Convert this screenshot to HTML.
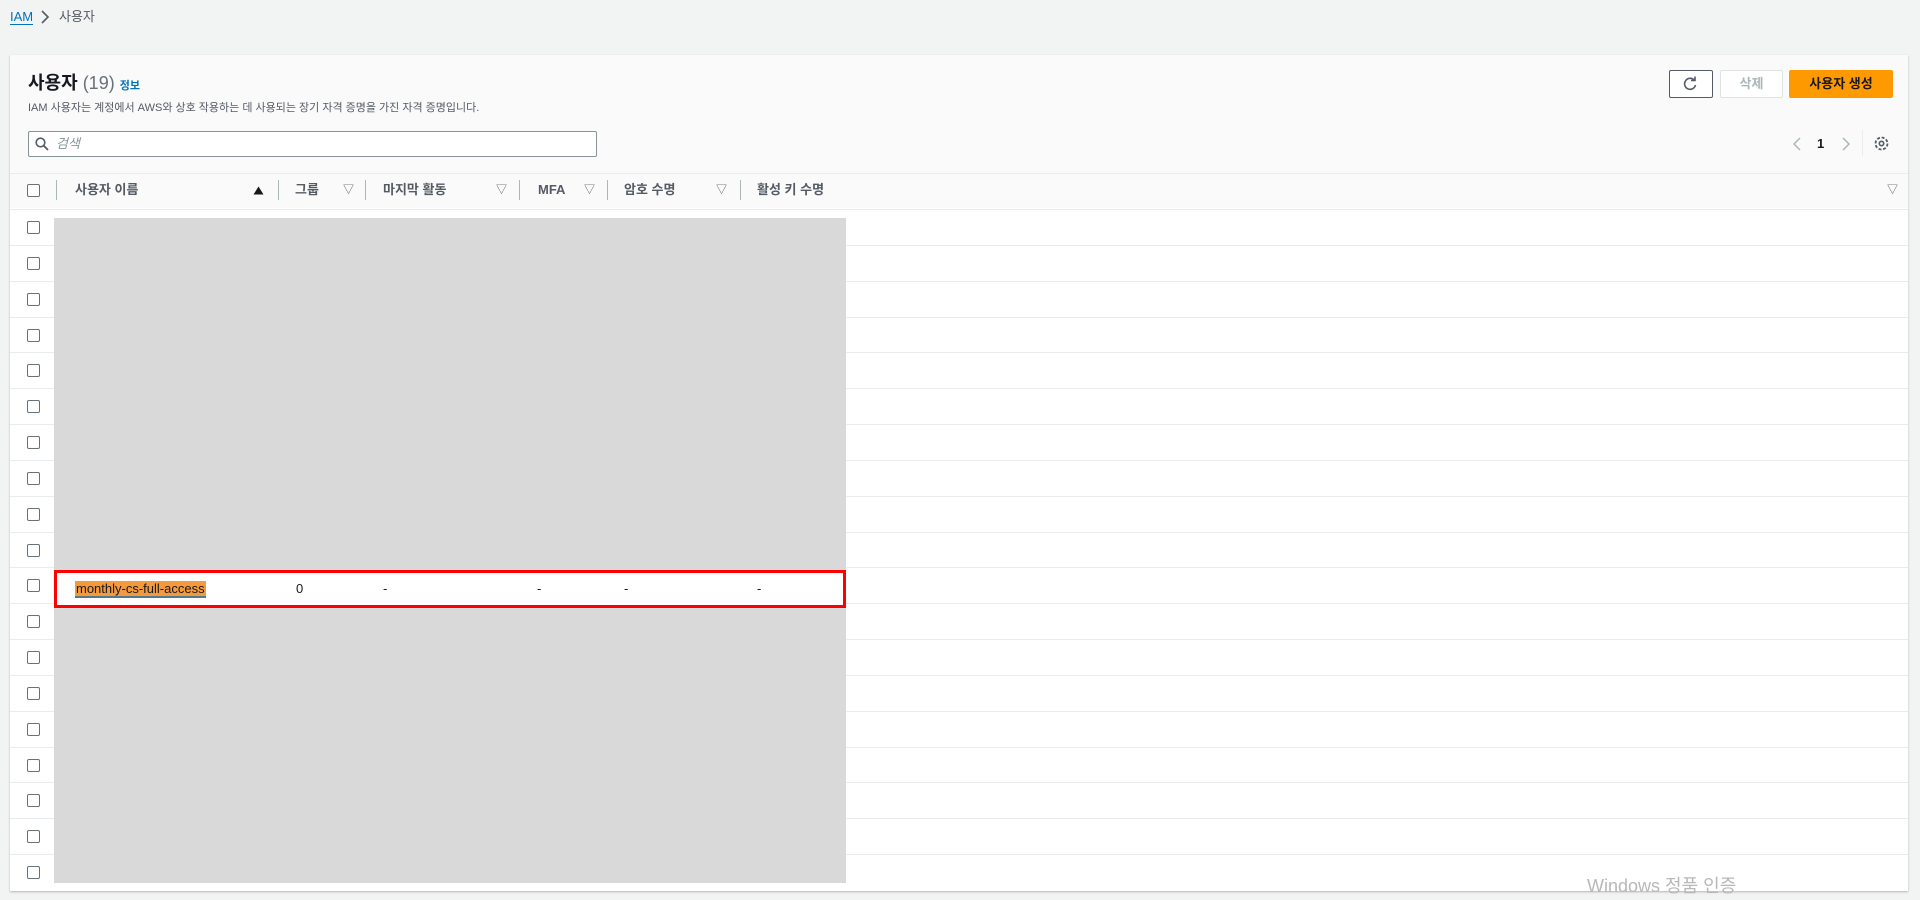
<!DOCTYPE html>
<html><head><meta charset="utf-8"><style>
*{box-sizing:border-box;margin:0;padding:0}
body{width:1920px;height:900px;background:#f2f3f3;font-family:"Liberation Sans","Noto Sans CJK KR",sans-serif;color:#16191f;position:relative;overflow:hidden}
.a{position:absolute;white-space:nowrap}
.panel{position:absolute;left:10px;top:55px;width:1898px;height:836px;background:#fff;box-shadow:0 1px 2px rgba(0,0,0,.25)}
.hdr{position:absolute;left:0;top:0;width:100%;height:153px;background:#fafafa}
.cb{position:absolute;width:13px;height:13px;border:1.5px solid #687078;border-radius:2px;background:#fff}
.row{position:absolute;left:10px;width:1898px;border-top:1px solid #e9ebed;height:36px}
.th{position:absolute;top:180px;height:20px;line-height:20px;font-size:13px;font-weight:bold;color:#545b64}
.sep{position:absolute;top:180px;width:1px;height:20px;background:#aab7b8}
.tri{position:absolute;top:180px;line-height:20px;font-size:11px;color:#545b64}
.cell{position:absolute;top:580px;line-height:18px;font-size:13px;color:#16191f}
</style></head><body>
<div class="a" style="left:10px;top:9px;font-size:13px;color:#0073bb;border-bottom:1px solid #0073bb;line-height:15px">IAM</div>
<svg class="a" style="left:40px;top:10px" width="10" height="14"><path d="M2 1l6 6-6 6" fill="none" stroke="#545b64" stroke-width="1.6"/></svg>
<div class="a" style="left:59px;top:7px;font-size:13px;line-height:20px;color:#545b64">사용자</div>

<div class="panel"><div class="hdr"></div></div>
<div class="a" style="left:28px;top:71px;font-size:18px;font-weight:bold;line-height:24px">사용자 <span style="font-weight:normal;color:#687078">(19)</span> <span style="font-size:11px;color:#0073bb;font-weight:bold">정보</span></div>
<div class="a" style="left:28px;top:100px;font-size:11px;line-height:16px;color:#545b64">IAM 사용자는 계정에서 AWS와 상호 작용하는 데 사용되는 장기 자격 증명을 가진 자격 증명입니다.</div>
<div class="a" style="left:28px;top:131px;width:569px;height:26px;border:1px solid #879596;border-radius:2px;background:#fff"></div>
<svg class="a" style="left:35px;top:137px" width="14" height="14"><circle cx="5.5" cy="5.5" r="4.3" fill="none" stroke="#545b64" stroke-width="1.6"/><path d="M8.8 8.8L13 13" stroke="#545b64" stroke-width="1.8"/></svg>
<div class="a" style="left:56px;top:134px;font-size:13px;line-height:20px;color:#879596;font-style:italic">검색</div>

<div class="a" style="left:1669px;top:70px;width:44px;height:28px;border:1px solid #545b64;border-radius:2px;background:#fff"></div>
<svg class="a" style="left:1682px;top:76px" width="16" height="16"><path d="M12.5 4.5A5.5 5.5 0 1 0 13.5 9" fill="none" stroke="#545b64" stroke-width="1.6"/><path d="M9 4.5h4v-4" fill="none" stroke="#545b64" stroke-width="1.6"/></svg>
<div class="a" style="left:1720px;top:70px;width:63px;height:28px;border:1px solid #e0e3e4;border-radius:2px;background:#fff;color:#aab7b8;font-size:13px;text-align:center;line-height:26px;font-weight:bold">삭제</div>
<div class="a" style="left:1789px;top:70px;width:104px;height:28px;background:#ff9900;border-radius:2px;color:#16191f;font-size:13px;text-align:center;line-height:28px;font-weight:bold">사용자 생성</div>

<svg class="a" style="left:1791px;top:136px" width="12" height="16"><path d="M9 2L3 8l6 6" fill="none" stroke="#aab7b8" stroke-width="1.5"/></svg>
<div class="a" style="left:1817px;top:134px;line-height:20px;font-size:13px;font-weight:bold">1</div>
<svg class="a" style="left:1840px;top:136px" width="12" height="16"><path d="M3 2l6 6-6 6" fill="none" stroke="#aab7b8" stroke-width="1.5"/></svg>
<div class="a" style="left:1862px;top:130px;width:1px;height:26px;background:#eaeded"></div>
<svg class="a" style="left:1873px;top:135px" width="17" height="17"><circle cx="8.5" cy="8.5" r="6" fill="none" stroke="#545b64" stroke-width="1.8" stroke-dasharray="3 1.7"/><circle cx="8.5" cy="8.5" r="2.2" fill="none" stroke="#545b64" stroke-width="1.6"/></svg>

<div class="row" style="top:173px;border-top:1px solid #eaeded;height:36px"></div>
<div class="cb" style="left:27px;top:184px"></div>
<div class="sep" style="left:56px"></div>
<div class="th" style="left:75px">사용자 이름</div>
<svg class="a" style="left:253px;top:186px" width="11" height="9"><path d="M0.5 8.5L5.5 0.5 10.5 8.5z" fill="#16191f"/></svg>
<div class="sep" style="left:278px"></div>
<div class="th" style="left:295px">그룹</div><div class="tri" style="left:343px">▽</div>
<div class="sep" style="left:365px"></div>
<div class="th" style="left:383px">마지막 활동</div><div class="tri" style="left:496px">▽</div>
<div class="sep" style="left:519px"></div>
<div class="th" style="left:538px">MFA</div><div class="tri" style="left:584px">▽</div>
<div class="sep" style="left:607px"></div>
<div class="th" style="left:624px">암호 수명</div><div class="tri" style="left:716px">▽</div>
<div class="sep" style="left:740px"></div>
<div class="th" style="left:757px">활성 키 수명</div><div class="tri" style="left:1887px">▽</div>

<div id="rows"></div>
<script>
var h='';for(var i=0;i<19;i++){var t=209+i*35.84;h+='<div class="row" style="top:'+t+'px"></div><div class="cb" style="left:27px;top:'+(t+12)+'px"></div>';}
document.getElementById('rows').innerHTML=h;
</script>
<div class="a" style="left:54px;top:218px;width:792px;height:665px;background:#d9d9d9"></div>
<div class="a" style="left:54px;top:570px;width:792px;height:38px;background:#fff;border:3px solid #ff0000"></div>
<div class="cell" style="left:75px;background:#f59a3c;border-bottom:2px solid #547a8a;line-height:15px;top:581px;padding:0 1px">monthly-cs-full-access</div>
<div class="cell" style="left:296px">0</div>
<div class="cell" style="left:383px">-</div>
<div class="cell" style="left:537px">-</div>
<div class="cell" style="left:624px">-</div>
<div class="cell" style="left:757px">-</div>
<div class="a" style="left:1587px;top:872px;font-size:18px;color:#b8b8b8">Windows 정품 인증</div>
</body></html>
